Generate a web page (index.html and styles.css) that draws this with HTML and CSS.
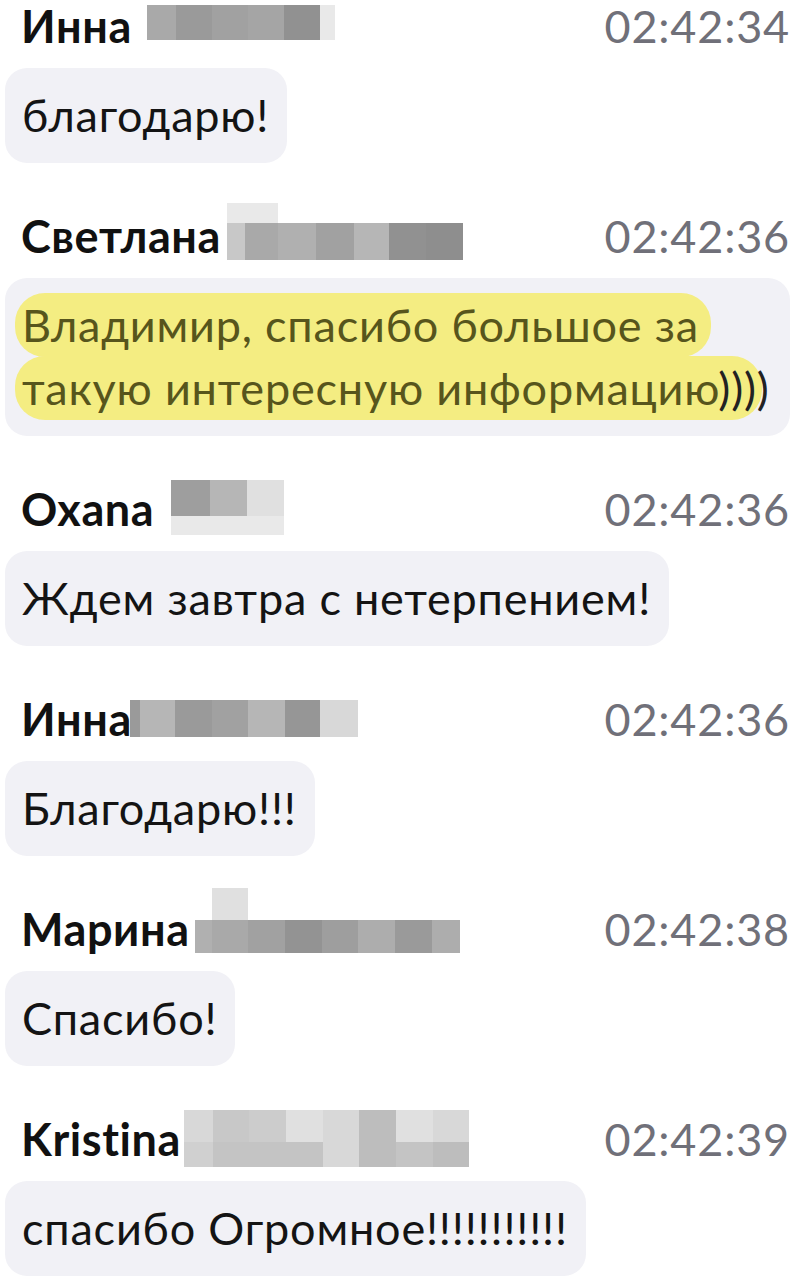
FILE: index.html
```html
<!DOCTYPE html>
<html lang="ru">
<head>
    <meta charset="UTF-8">
    <meta name="viewport" content="width=device-width, initial-scale=1.0">
    <title>Чат</title>
    <link rel="stylesheet" href="styles.css">
</head>
<body>

    <div class="chat">

        <!-- Инна -->
        <div class="msg">
            <div class="head">
                <span class="name">Инна</span>
                <div class="mosaic mos-1">
                    <i class="sa8"></i><i class="s9a"></i><i class="sa0"></i><i class="sa4"></i><i class="s90"></i><i class="se8"></i>
                </div>
                <span class="time">02:42:34</span>
            </div>
            <div class="bubble">благодарю!</div>
        </div>

        <!-- Светлана -->
        <div class="msg">
            <div class="head">
                <span class="name">Светлана</span>
                <div class="mosaic mos-2">
                    <i class="se8"></i><i class="se8"></i><i></i><i></i><i></i><i></i><i></i>
                    <i class="sc8"></i><i class="sa8"></i><i class="sb0"></i><i class="sa0"></i><i class="sb6"></i><i class="s90"></i><i class="s8e"></i>
                </div>
                <span class="time">02:42:36</span>
            </div>
            <div class="bubble wide">
                <span class="marker">Владимир, спасибо большое за</span><br>
                <span class="marker tail">такую интересную информацию<span class="smile">))))</span></span>
            </div>
        </div>

        <!-- Oxana -->
        <div class="msg">
            <div class="head">
                <span class="name">Oxana</span>
                <div class="mosaic mos-3">
                    <i class="s9e"></i><i class="sb6"></i><i class="se0"></i>
                    <i class="se8"></i><i class="se8"></i><i class="se8"></i>
                </div>
                <span class="time">02:42:36</span>
            </div>
            <div class="bubble">Ждем завтра с нетерпением!</div>
        </div>

        <!-- Инна -->
        <div class="msg">
            <div class="head">
                <span class="name">Инна</span>
                <div class="mosaic mos-4">
                    <i class="s9a"></i><i class="sb6"></i><i class="s9a"></i><i class="sa0"></i><i class="sb6"></i><i class="s96"></i><i class="sd8"></i>
                </div>
                <span class="time">02:42:36</span>
            </div>
            <div class="bubble">Благодарю!!!</div>
        </div>

        <!-- Марина -->
        <div class="msg">
            <div class="head">
                <span class="name">Марина</span>
                <div class="mosaic mos-5">
                    <i></i><i class="se0"></i><i></i><i></i><i></i><i></i><i></i><i></i>
                    <i class="sb0"></i><i class="sa8"></i><i class="sa0"></i><i class="s93"></i><i class="s9e"></i><i class="sac"></i><i class="s9a"></i><i class="sac"></i>
                </div>
                <span class="time">02:42:38</span>
            </div>
            <div class="bubble">Спасибо!</div>
        </div>

        <!-- Kristina -->
        <div class="msg">
            <div class="head">
                <span class="name">Kristina</span>
                <div class="mosaic mos-6">
                    <i class="sd8"></i><i class="sc8"></i><i class="scc"></i><i class="se0"></i><i class="sd8"></i><i class="sbd"></i><i class="se0"></i><i class="sd8"></i>
                    <i class="sd0"></i><i class="sc4"></i><i class="sc4"></i><i class="sc4"></i><i class="sd8"></i><i class="sbd"></i><i class="sc4"></i><i class="sbd"></i>
                </div>
                <span class="time">02:42:39</span>
            </div>
            <div class="bubble">спасибо Огромное!!!!!!!!!!!</div>
        </div>

    </div>

</body>
</html>
```

FILE: styles.css
```css
body {
    margin: 0;
    padding: 0;
    background-color: #fff;
    font-family: 'Lato', 'Noto Sans', sans-serif;
    color: #141414;
}

.chat {
    padding: 0 7px 0 5px;
}

.msg {
    margin-bottom: 47px;
}

/* name row */
.head {
    display: flex;
    align-items: flex-start;
    height: 53px;
    margin-bottom: 15px;
    padding-left: 16px;
}

.name {
    font-size: 45px;
    font-weight: 700;
    letter-spacing: 0.6px;
    line-height: 53px;
    color: #111;
    white-space: nowrap;
}

.time {
    margin-left: auto;
    font-size: 45px;
    letter-spacing: 0.8px;
    line-height: 53px;
    color: #707079;
    white-space: nowrap;
}

/* message bubble */
.bubble {
    width: fit-content;
    padding: 16px 18px 16px 17px;
    background-color: #f1f1f6;
    border-radius: 22px;
    font-size: 45px;
    letter-spacing: 0.8px;
    line-height: 63px;
    white-space: nowrap;
}

.bubble.wide {
    width: auto;
}

.marker {
    background-color: #f4ed82;
    color: #57551c;
    padding: 5px 12px 5px 7px;
    margin-left: -7px;
    border-radius: 30px;
}

.marker.tail {
    padding-right: 0;
}

.marker .smile {
    color: #222;
    margin-left: -2px;
    margin-right: -8px;
}

/* blurred surnames */
.mosaic {
    display: grid;
    flex-shrink: 0;
}

.mosaic i {
    display: block;
}

.mos-1 {
    grid-template-columns: 29px 36px 36px 36px 36px 15px;
    grid-template-rows: 35px;
    margin: 5px 0 0 15px;
}

.mos-2 {
    grid-template-columns: 18px 33px 38px 38px 35px 37px 37px;
    grid-template-rows: 20px 37px;
    margin: -7px 0 0 6px;
}

.mos-3 {
    grid-template-columns: 39px 37px 37px;
    grid-template-rows: 36px 19px;
    margin: -3px 0 0 17px;
}

.mos-4 {
    grid-template-columns: 10px 35px 37px 36px 37px 35px 38px;
    grid-template-rows: 37px;
    margin: 7px 0 0 -2px;
}

.mos-5 {
    grid-template-columns: 17px 36px 37px 37px 36px 37px 37px 28px;
    grid-template-rows: 32px 33px;
    margin: -15px 0 0 5px;
}

.mos-6 {
    grid-template-columns: 29px 36px 37px 37px 36px 37px 37px 36px;
    grid-template-rows: 32px 25px;
    margin: -3px 0 0 3px;
}

.s8e { background-color: #8e8e8e; }
.s90 { background-color: #919191; }
.s93 { background-color: #939393; }
.s96 { background-color: #969696; }
.s9a { background-color: #9a9a9a; }
.s9e { background-color: #9e9e9e; }
.sa0 { background-color: #a1a1a1; }
.sa4 { background-color: #a5a5a5; }
.sa8 { background-color: #a9a9a9; }
.sac { background-color: #adadad; }
.sb0 { background-color: #b0b0b0; }
.sb6 { background-color: #b6b6b6; }
.sbd { background-color: #bdbdbd; }
.sc4 { background-color: #c4c4c4; }
.sc8 { background-color: #c8c8c8; }
.scc { background-color: #cccccc; }
.sd0 { background-color: #d0d0d0; }
.sd8 { background-color: #d8d8d8; }
.se0 { background-color: #e0e0e0; }
.se8 { background-color: #e9e9e9; }
```
